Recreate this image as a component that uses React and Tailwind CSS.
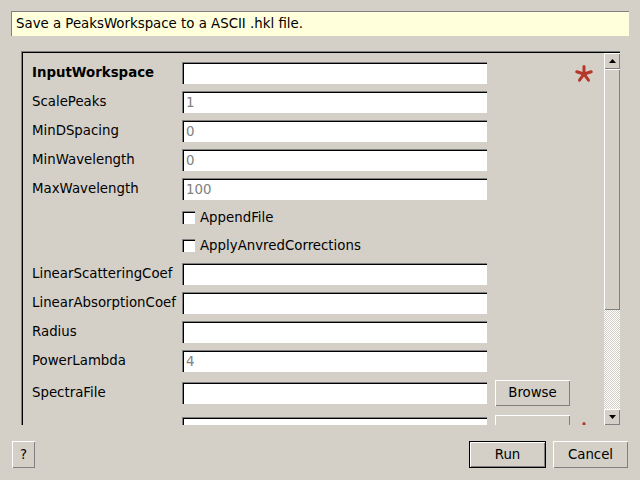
import React from "react";

const rows = [
  { label: "InputWorkspace", bold: true, star: true },
  { label: "ScalePeaks", value: "1" },
  { label: "MinDSpacing", value: "0" },
  { label: "MinWavelength", value: "0" },
  { label: "MaxWavelength", value: "100" },
  { check: "AppendFile" },
  { check: "ApplyAnvredCorrections" },
  { label: "LinearScatteringCoef" },
  { label: "LinearAbsorptionCoef" },
  { label: "Radius" },
  { label: "PowerLambda", value: "4" },
  { label: "SpectraFile", browse: true, top: "mt-[1px]" },
  { label: "Filename", bold: true, browse: true, star: true, top: "mt-[2px]", low: true },
];

// classic sunken edit box
const Field = ({ value }) => (
  <div className="w-[305px] h-[22px] border-t border-l border-[#808080] border-b-white border-r-white">
    <div className="h-full border-t border-l border-[#000000] border-b-[#d4d0c8] border-r-[#d4d0c8] bg-white flex items-center pl-[2px] text-[#808080]">
      {value}
    </div>
  </div>
);

const Raised = ({ className, children }) => (
  <div className={"border-t border-l border-white border-b-[#000000] border-r-[#000000] " + className}>
    <div className="h-full w-full border-b border-r border-[#808080] flex items-center justify-center">{children}</div>
  </div>
);

const Star = () => (
  <svg width="18" height="18" viewBox="0 0 18 18">
    <g stroke="#b5382a" strokeWidth="3" strokeLinecap="round">
      <line x1="9" y1="9" x2="9" y2="1.5" />
      <line x1="9" y1="9" x2="16.2" y2="6.7" />
      <line x1="9" y1="9" x2="13.5" y2="15.2" />
      <line x1="9" y1="9" x2="4.5" y2="15.2" />
      <line x1="9" y1="9" x2="1.8" y2="6.7" />
    </g>
  </svg>
);

const Arrow = ({ down }) => (
  <svg width="7" height="4" viewBox="0 0 7 4">
    <polygon points={down ? "0,0 7,0 3.5,4" : "0,4 7,4 3.5,0"} fill="#000" />
  </svg>
);

export default function App() {
  return (
    <div className="w-[640px] h-[480px] bg-[#d4d0c8] flex flex-col font-['DejaVu_Sans',sans-serif] text-[13.33px] text-black overflow-hidden">
      <div className="mx-[11px] mt-[11px] h-[25px] bg-[#ffffdc] border-t border-l border-[#808080] border-b-white border-r-white flex items-center pl-[4px] shrink-0">
        Save a PeaksWorkspace to a ASCII .hkl file.
      </div>

      <div className="ml-[21px] mt-[15px] w-[599px] h-[374px] shrink-0 border-t border-l border-[#808080] border-b-white border-r-white">
        <div className="h-full border-t border-l border-[#000000] border-b-[#d4d0c8] border-r-[#d4d0c8] flex">
          <div className="flex-1 overflow-hidden pl-[9px] pt-[9px] flex flex-col gap-[7px]">
            {rows.map((r, i) =>
              r.check ? (
                <div key={i} className="h-[21px] flex items-center pl-[150px] shrink-0">
                  <div className="w-[13px] h-[13px] border-t border-l border-[#808080] border-b-white border-r-white">
                    <div className="h-full border-t border-l border-[#000000] border-b-[#d4d0c8] border-r-[#d4d0c8] bg-white" />
                  </div>
                  <span className="ml-[5px]">{r.check}</span>
                </div>
              ) : (
                <div key={i} className={"flex items-center shrink-0 " + (r.browse ? "h-[26px] " + r.top : "h-[22px]")}>
                  <div className={"w-[150px] " + (r.bold ? "font-bold " : "") + (r.low ? "pt-[7px]" : "")}>{r.label}</div>
                  <Field value={r.value} />
                  {r.browse ? (
                    <Raised className="ml-[8px] w-[75px] h-[26px]">
                      <span className={r.low ? "pt-[7px]" : ""}>Browse</span>
                    </Raised>
                  ) : (
                    <div className="ml-[8px] w-[75px]" />
                  )}
                  {r.star && (
                    <div className={"ml-[5px] self-start " + (r.low ? "mt-[7px]" : "mt-[3px]")}>
                      <Star />
                    </div>
                  )}
                </div>
              )
            )}
          </div>

          <div className="w-[16px] h-full flex flex-col shrink-0">
            <Raised className="h-[16px] shrink-0">
              <Arrow />
            </Raised>
            <Raised className="h-[241px] shrink-0">{null}</Raised>
            <div className="flex-1 bg-[image:repeating-conic-gradient(#ffffff_0%_25%,#d4d0c8_0%_50%)] bg-[length:2px_2px]" />
            <Raised className="h-[16px] shrink-0">
              <Arrow down />
            </Raised>
          </div>
        </div>
      </div>

      <div className="mt-[16px] mx-[12px] flex items-center">
        <Raised className="w-[23px] h-[27px]">?</Raised>
        <div className="flex-1" />
        <div className="w-[77px] h-[27px] border border-black">
          <Raised className="w-full h-full">Run</Raised>
        </div>
        <Raised className="ml-[7px] w-[75px] h-[27px]">Cancel</Raised>
      </div>
    </div>
  );
}
